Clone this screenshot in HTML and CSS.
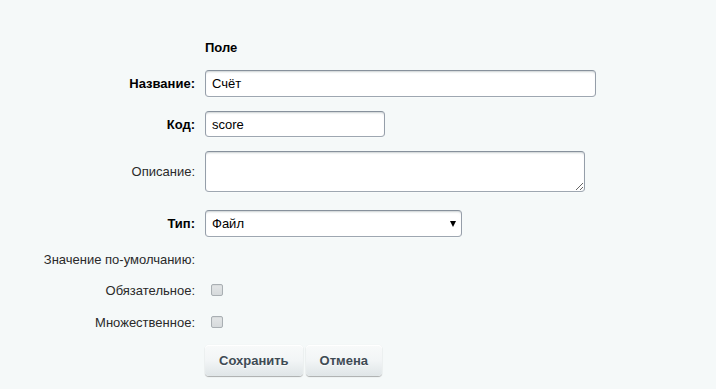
FILE: index.html
```html
<!DOCTYPE html>
<html lang="ru">
<head>
  <meta charset="UTF-8">
  <meta name="viewport" content="width=device-width, initial-scale=1.0">
  <title>Поле</title>
  <link rel="stylesheet" href="styles.css">
</head>
<body>
  <form class="field-form">
    <div class="row row-title">
      <div class="label"></div>
      <div class="value"><b>Поле</b></div>
    </div>
    <div class="row row-name">
      <label class="label bold" for="name">Название:</label>
      <div class="value"><input type="text" id="name" class="input input-name" value="Счёт"></div>
    </div>
    <div class="row">
      <label class="label bold" for="code">Код:</label>
      <div class="value"><input type="text" id="code" class="input input-code" value="score"></div>
    </div>
    <div class="row">
      <label class="label" for="descr">Описание:</label>
      <div class="value"><textarea id="descr" class="input textarea"></textarea></div>
    </div>
    <div class="row row-type">
      <label class="label bold" for="type">Тип:</label>
      <div class="value">
        <span class="select-wrap">
          <select id="type" class="input select">
            <option>Файл</option>
          </select>
        </span>
      </div>
    </div>
    <div class="row row-text row-default">
      <div class="label">Значение по-умолчанию:</div>
      <div class="value"></div>
    </div>
    <div class="row row-text row-required">
      <label class="label" for="required">Обязательное:</label>
      <div class="value"><input type="checkbox" id="required" class="checkbox"></div>
    </div>
    <div class="row row-text row-multiple">
      <label class="label" for="multiple">Множественное:</label>
      <div class="value"><input type="checkbox" id="multiple" class="checkbox"></div>
    </div>
    <div class="row row-buttons">
      <div class="label"></div>
      <div class="value buttons">
        <button type="submit" class="btn">Сохранить</button>
        <button type="button" class="btn">Отмена</button>
      </div>
    </div>
  </form>
</body>
</html>
```

FILE: styles.css
```css
* {
  margin: 0;
  padding: 0;
  box-sizing: border-box;
}

body {
  font-family: "Liberation Sans", Arial, sans-serif;
  font-size: 13px;
  color: #000;
  background-color: #f5f9f9;
  padding-top: 39px;
  min-height: 100vh;
}

/* Форма */
.field-form {
  display: flex;
  flex-direction: column;
  gap: 14px;
}

.row {
  display: flex;
  align-items: center;
}

.row-text {
  height: 16px;
}

.row-title {
  height: 16px;
  margin-bottom: 1px;
}

.row-type {
  margin-top: 4px;
}

.row-required {
  margin-top: 1px;
}

.row-multiple {
  margin-top: 2px;
}

.row-buttons {
  margin-top: 1px;
}

.label {
  width: 196px;
  flex-shrink: 0;
  text-align: right;
  padding-right: 1px;
  color: #2a2a2a;
}

.label.bold {
  font-weight: bold;
  color: #000;
}

.value {
  padding-left: 9px;
}

/* Поля ввода */
.input {
  display: block;
  height: 27px;
  padding: 0 6px;
  font-family: inherit;
  font-size: 13px;
  color: #000;
  background-color: #fff;
  border: 1px solid;
  border-color: #87919c #959ea9 #9ea7b1 #959ea9;
  border-radius: 4px;
  box-shadow: 0 1px 0 0 rgba(255, 255, 255, 0.3), inset 0 2px 2px -1px rgba(180, 188, 191, 0.7);
  outline: none;
}

.input-name {
  width: 391px;
}

.input-code {
  width: 180px;
  height: 26px;
}

.textarea {
  width: 380px;
  height: 41px;
  padding: 4px 6px;
  resize: both;
}

.select-wrap {
  position: relative;
  display: block;
  width: 257px;
}

.select {
  width: 257px;
  appearance: none;
  -webkit-appearance: none;
  padding-right: 20px;
}

.select-wrap::after {
  content: "";
  position: absolute;
  right: 6px;
  top: 11px;
  border-left: 3.5px solid transparent;
  border-right: 3.5px solid transparent;
  border-top: 6px solid #000;
  pointer-events: none;
}

/* Чекбоксы */
.checkbox {
  appearance: none;
  -webkit-appearance: none;
  display: block;
  width: 12px;
  height: 12px;
  margin-left: 6px;
  border: 1px solid #a9afb3;
  border-radius: 2px;
  background: linear-gradient(#e3e6e7, #d6dadc);
  box-shadow: inset 0 1px 1px rgba(0, 0, 0, 0.05);
}

/* Кнопки */
.buttons {
  display: flex;
  gap: 3px;
}

.btn {
  height: 31px;
  padding: 0 14px;
  font-family: inherit;
  font-size: 13px;
  font-weight: bold;
  color: #3f4b54;
  text-shadow: 0 1px rgba(255, 255, 255, 0.7);
  background: linear-gradient(#f8fafa, #f2f5f6 50%, #dfe5e7);
  border: none;
  border-radius: 4px;
  box-shadow: 0 0 1px rgba(0, 0, 0, 0.11), 0 1px 1px rgba(0, 0, 0, 0.3), inset 0 1px #fff, inset 0 0 1px rgba(255, 255, 255, 0.5);
  cursor: pointer;
}
```
